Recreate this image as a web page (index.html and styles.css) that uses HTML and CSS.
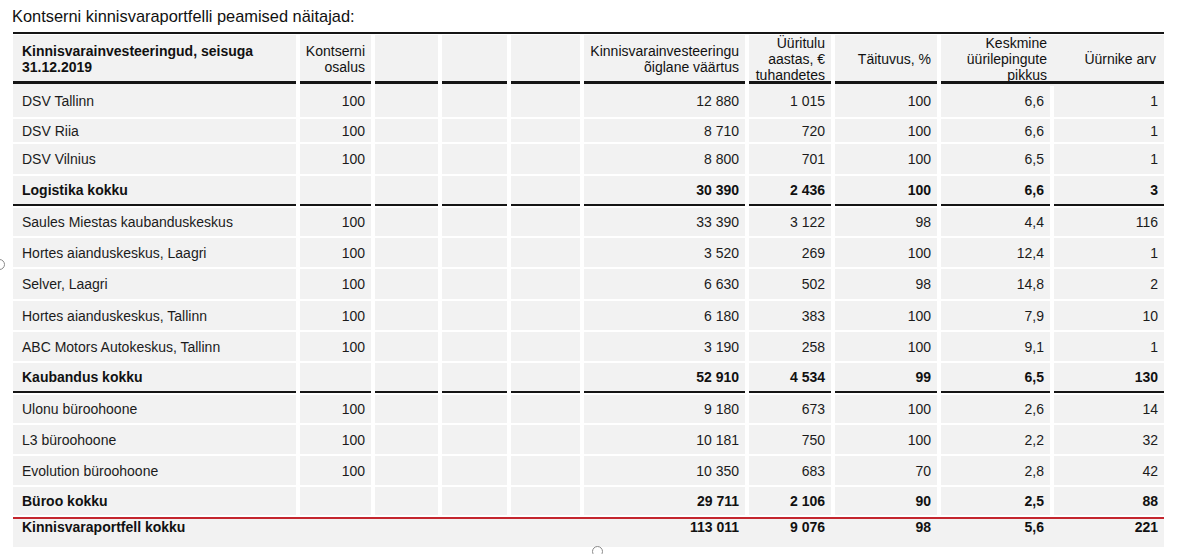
FILE: index.html
```html
<!DOCTYPE html>
<html lang="et">
<head>
<meta charset="utf-8">
<title>Kontserni kinnisvaraportfelli peamised näitajad</title>
<link rel="stylesheet" href="styles.css">
</head>
<body>
<div class="page">
  <div class="title">Kontserni kinnisvaraportfelli peamised näitajad:</div>
  <div class="table">
    <div class="rule-top"></div>
    <div class="hrow">
      <div class="hc l b">Kinnisvarainvesteeringud, seisuga<br>31.12.2019</div>
      <div class="hc">Kontserni<br>osalus</div>
      <div class="hc"></div>
      <div class="hc"></div>
      <div class="hc"></div>
      <div class="hc">Kinnisvarainvesteeringu<br>õiglane väärtus</div>
      <div class="hc">Üüritulu<br>aastas, €<br>tuhandetes</div>
      <div class="hc">Täituvus, %</div>
      <div class="hc wide">
        <span class="hv">Keskmine<br>üürilepingute<br>pikkus</span>
        <span class="hv last">Üürnike arv</span>
      </div>
    </div>
    <div class="segs">
      <i></i><i></i><i></i><i></i><i></i><i></i><i></i><i></i><i class="wide"></i>
    </div>
    <div class="rows">
      <div class="row h32">
        <div class="c l">DSV Tallinn</div><div class="c">100</div><div class="c"></div><div class="c"></div><div class="c"></div>
        <div class="c">12 880</div><div class="c">1 015</div><div class="c">100</div><div class="c">6,6</div><div class="c">1</div>
      </div>
      <div class="row h23">
        <div class="c l">DSV Riia</div><div class="c">100</div><div class="c"></div><div class="c"></div><div class="c"></div>
        <div class="c">8 710</div><div class="c">720</div><div class="c">100</div><div class="c">6,6</div><div class="c">1</div>
      </div>
      <div class="row h30">
        <div class="c l">DSV Vilnius</div><div class="c">100</div><div class="c"></div><div class="c"></div><div class="c"></div>
        <div class="c">8 800</div><div class="c">701</div><div class="c">100</div><div class="c">6,5</div><div class="c">1</div>
      </div>
      <div class="row h30 sum sep">
        <div class="c l">Logistika kokku</div><div class="c"></div><div class="c"></div><div class="c"></div><div class="c"></div>
        <div class="c">30 390</div><div class="c">2 436</div><div class="c">100</div><div class="c">6,6</div><div class="c">3</div>
      </div>

      <div class="row h28">
        <div class="c l">Saules Miestas kaubanduskeskus</div><div class="c">100</div><div class="c"></div><div class="c"></div><div class="c"></div>
        <div class="c">33 390</div><div class="c">3 122</div><div class="c">98</div><div class="c">4,4</div><div class="c">116</div>
      </div>
      <div class="row h29">
        <div class="c l">Hortes aianduskeskus, Laagri</div><div class="c">100</div><div class="c"></div><div class="c"></div><div class="c"></div>
        <div class="c">3 520</div><div class="c">269</div><div class="c">100</div><div class="c">12,4</div><div class="c">1</div>
      </div>
      <div class="row h30">
        <div class="c l">Selver, Laagri</div><div class="c">100</div><div class="c"></div><div class="c"></div><div class="c"></div>
        <div class="c">6 630</div><div class="c">502</div><div class="c">98</div><div class="c">14,8</div><div class="c">2</div>
      </div>
      <div class="row h29">
        <div class="c l">Hortes aianduskeskus, Tallinn</div><div class="c">100</div><div class="c"></div><div class="c"></div><div class="c"></div>
        <div class="c">6 180</div><div class="c">383</div><div class="c">100</div><div class="c">7,9</div><div class="c">10</div>
      </div>
      <div class="row h29">
        <div class="c l">ABC Motors Autokeskus, Tallinn</div><div class="c">100</div><div class="c"></div><div class="c"></div><div class="c"></div>
        <div class="c">3 190</div><div class="c">258</div><div class="c">100</div><div class="c">9,1</div><div class="c">1</div>
      </div>
      <div class="row h30 sum sep">
        <div class="c l">Kaubandus kokku</div><div class="c"></div><div class="c"></div><div class="c"></div><div class="c"></div>
        <div class="c">52 910</div><div class="c">4 534</div><div class="c">99</div><div class="c">6,5</div><div class="c">130</div>
      </div>

      <div class="row h28">
        <div class="c l">Ulonu büroohoone</div><div class="c">100</div><div class="c"></div><div class="c"></div><div class="c"></div>
        <div class="c">9 180</div><div class="c">673</div><div class="c">100</div><div class="c">2,6</div><div class="c">14</div>
      </div>
      <div class="row h29">
        <div class="c l">L3 büroohoone</div><div class="c">100</div><div class="c"></div><div class="c"></div><div class="c"></div>
        <div class="c">10 181</div><div class="c">750</div><div class="c">100</div><div class="c">2,2</div><div class="c">32</div>
      </div>
      <div class="row h29">
        <div class="c l">Evolution büroohoone</div><div class="c">100</div><div class="c"></div><div class="c"></div><div class="c"></div>
        <div class="c">10 350</div><div class="c">683</div><div class="c">70</div><div class="c">2,8</div><div class="c">42</div>
      </div>
      <div class="row h28 sum">
        <div class="c l">Büroo kokku</div><div class="c"></div><div class="c"></div><div class="c"></div><div class="c"></div>
        <div class="c">29 711</div><div class="c">2 106</div><div class="c">90</div><div class="c">2,5</div><div class="c">88</div>
      </div>

      <div class="row total sum">
        <div class="c l">Kinnisvaraportfell kokku</div><div class="c"></div><div class="c"></div><div class="c"></div><div class="c"></div>
        <div class="c">113 011</div><div class="c">9 076</div><div class="c">98</div><div class="c">5,6</div><div class="c">221</div>
      </div>
    </div>
  </div>
  <span class="ring ring-left"></span>
  <span class="ring ring-bottom"></span>
</div>
</body>
</html>
```

FILE: styles.css
```css
* { box-sizing: border-box; }

html, body {
  margin: 0;
  padding: 0;
  background: #ffffff;
}

body {
  font-family: "Liberation Sans", Arial, sans-serif;
  color: #1b1b1b;
  width: 1184px;
  height: 554px;
  overflow: hidden;
}

.page {
  position: relative;
  width: 1184px;
  height: 554px;
}

.title {
  font-size: 16.4px;
  line-height: 18px;
  padding: 7px 0 0 12px;
  height: 32px;
  color: #111;
}

.table {
  margin-left: 13px;
  width: 1151px;
}

.rule-top {
  height: 2px;
  background: #151515;
  margin-bottom: 1px;
}

/* header */
.hrow,
.segs {
  display: grid;
  grid-template-columns: 283px 71px 63px 65px 69px 161px 82px 102px 223px;
  column-gap: 4px;
}

.hrow {
  height: 46px;
  font-size: 14px;
  line-height: 16px;
  color: #111;
}

.hc {
  background: #f2f2f2;
  display: flex;
  align-items: center;
  justify-content: flex-end;
  text-align: right;
  padding: 0 6px 3px 4px;
  white-space: nowrap;
}

.hc.l {
  justify-content: flex-start;
  text-align: left;
  padding-left: 9px;
}

.hc.wide {
  display: grid;
  grid-template-columns: 109px 114px;
  padding: 0 0 3px 0;
  align-items: center;
}

.hv {
  display: block;
  text-align: right;
  padding-right: 3px;
}

.hv.last {
  padding-right: 8px;
}

.segs {
  height: 3px;
  margin-bottom: 1px;
}

.segs i {
  display: block;
  height: 3px;
  background: #151515;
}

/* body rows */
.rows {
  display: flex;
  flex-direction: column;
  gap: 2px;
}

.row {
  display: grid;
  grid-template-columns: 283px 71px 63px 65px 69px 161px 82px 102px 109px 110px;
  column-gap: 4px;
  font-size: 14px;
  line-height: 16px;
}

.c {
  background: #f2f2f2;
  display: flex;
  align-items: center;
  justify-content: flex-end;
  text-align: right;
  padding: 0 6px 0 4px;
  white-space: nowrap;
}

.c.l {
  justify-content: flex-start;
  text-align: left;
  padding-left: 9px;
}

.b { font-weight: bold; }

.h23 { height: 23px; }
.h28 { height: 28px; }
.h29 { height: 29px; }
.h30 { height: 30px; }
.h32 { height: 32px; }

.sum { font-weight: bold; color: #111; }

.sep .c {
  border-bottom: 2px solid #151515;
}

.total {
  height: 30px;
  background: #f2f2f2;
  border-top: 2px solid #c4262e;
}

.total .c {
  background: transparent;
  align-items: flex-start;
}

.ring {
  position: absolute;
  width: 11px;
  height: 11px;
  border: 1.5px solid #8a8a8a;
  border-radius: 50%;
}

.ring-left {
  left: -6px;
  top: 259px;
}

.ring-bottom {
  left: 592px;
  top: 546px;
}
```
